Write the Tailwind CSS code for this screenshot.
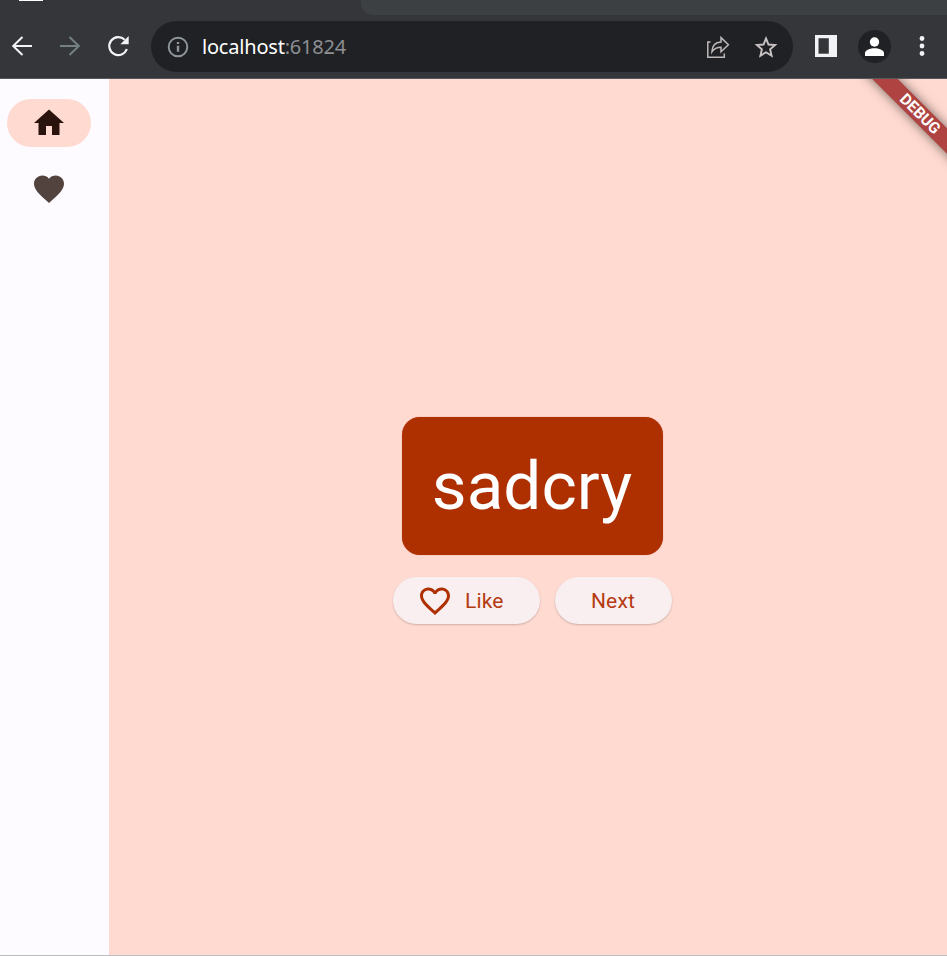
<!DOCTYPE html>
<html lang="en">
<head>
<meta charset="utf-8">
<title>localhost:61824</title>
<script src="https://cdn.jsdelivr.net/npm/@tailwindcss/browser@4"></script>
</head>
<body class="h-screen overflow-hidden flex flex-col bg-[#fdfbff] font-['Roboto',sans-serif]">
  <header class="h-[79px] shrink-0 flex flex-col bg-[#35363a] border-b border-[#55585d]">
    <div class="h-[15px] flex justify-between">
      <div class="ml-[19px] w-6 h-px bg-white"></div>
      <div class="w-[586px] bg-[#3c4043] rounded-bl-[12px]"></div>
    </div>
    <div class="flex items-center h-[63px]">
      <svg class="ml-[10px] mb-[2px] w-6 h-6 shrink-0" viewBox="0 0 24 24" fill="none" stroke="#f1f3f4" stroke-width="2"><path d="M22 12H3.500M12.500 3 3.200 12l9.300 9"/></svg>
      <svg class="ml-6 mb-[2px] w-6 h-6 shrink-0" viewBox="0 0 24 24" fill="none" stroke="#758083" stroke-width="2"><path d="M2 12h18.500M11.500 3l9.300 9-9.300 9"/></svg>
      <svg class="ml-6 mb-[2px] w-6 h-6 shrink-0" viewBox="0 0 24 24"><path d="M20.800 15a9 9 0 1 1-2.100-9.200" fill="none" stroke="#f1f3f4" stroke-width="2.200"/><path d="M22.700 2v8.300h-8.300z" fill="#f1f3f4"/></svg>
      <div class="ml-[21px] w-[642px] h-[51px] rounded-full bg-[#202124] flex items-center shrink-0">
        <svg class="ml-4 mt-px w-[22px] h-[22px]" viewBox="0 0 22 22"><circle cx="11" cy="11" r="9.300" fill="none" stroke="#8f979d" stroke-width="1.900"/><path d="M11 9.800v6M11 5.900v2.200" stroke="#8f979d" stroke-width="2.400"/></svg>
        <div class="ml-[13px] text-[20px] leading-6 tracking-[-0.2px] text-white font-['Noto_Sans',sans-serif] whitespace-nowrap">localhost<span class="text-[#8c8e92]">:61824</span></div>
        <svg class="ml-auto mr-[24px] w-6 h-6" viewBox="0 0 24 24" fill="none" stroke="#bdb8b8" stroke-width="1.500"><path d="M4.500 7H1.800v15.200h16.500v-3.800"/><path d="M15 2.600v4.400C9.500 7.200 6.200 10.600 5.900 16.800c2.300-3.400 5-4.600 9.100-4.600v4.500l7.400-7z"/></svg>
        <svg class="mr-[15px] w-6 h-6" viewBox="0 0 24 24" fill="none" stroke="#c9c3c4" stroke-width="1.900"><path d="m12 3.400 2.500 6.100 6.600.5-5 4.300 1.500 6.400L12 17.300l-5.600 3.400 1.500-6.400-5-4.300 6.600-.5z"/></svg>
      </div>
      <svg class="ml-[22px] mb-[2px] w-[22px] h-[22px] shrink-0" viewBox="0 0 22 22"><path d="M0 0h22v22H0z" fill="#f1f3f4"/><path d="M3.500 3.200h10.300v15.500H3.500z" fill="#35363a"/></svg>
      <div class="ml-[21px] w-[33px] h-[33px] rounded-full bg-[#202124] shrink-0">
        <svg class="w-[33px] h-[33px]" viewBox="0 0 33 33" fill="#fff"><circle cx="16.500" cy="12" r="4.700"/><path d="M7 26v-3c0-3 5.500-4.800 9.500-4.800s9.500 1.800 9.500 4.800v3z"/></svg>
      </div>
      <svg class="ml-[24px] mb-[2px] w-[14px] h-6 shrink-0" viewBox="0 0 14 24" fill="#f1f3f4"><circle cx="7" cy="4.500" r="2.400"/><circle cx="7" cy="12" r="2.400"/><circle cx="7" cy="19.500" r="2.400"/></svg>
    </div>
  </header>
  <div class="flex flex-1 border-b border-black/25">
    <nav class="w-[109px] shrink-0 pt-5 pl-[7px] flex flex-col gap-[18px]">
      <div class="w-[84px] h-12 rounded-full bg-[#ffdad1] flex items-center justify-center">
        <svg class="w-9 h-9" viewBox="0 0 24 24" fill="#2b130d"><path d="M10 20v-6h4v6h5v-8h3L12 3 2 12h3v8z"/></svg>
      </div>
      <div class="w-[84px] h-12 flex items-center justify-center">
        <svg class="w-9 h-9" viewBox="0 0 24 24" fill="#53433f"><path d="M12 21.350l-1.450-1.320C5.400 15.360 2 12.280 2 8.500 2 5.420 4.420 3 7.500 3c1.740 0 3.410.81 4.500 2.090C13.090 3.810 14.760 3 16.500 3 19.580 3 22 5.420 22 8.500c0 3.780-3.400 6.860-8.550 11.540z"/></svg>
      </div>
    </nav>
    <main class="flex-1 relative overflow-hidden bg-[#ffdad1] flex flex-col items-center pt-[338px] pl-[9px]">
      <div class="w-[261px] h-[138px] rounded-[18px] bg-[#ae2f00] shadow-[0_0_1px_rgba(174,47,0,0.6)] flex items-center justify-center pb-px pr-px text-white text-[67.5px] leading-[78px]">sadcry</div>
      <div class="mt-[22px] flex gap-[15px] text-[21px] text-[#b53b12] tracking-[0.15px]">
        <div class="w-[147px] h-[47px] rounded-full bg-[#f9eef0] shadow-[0_1px_2px_rgba(0,0,0,0.2)] flex items-center pl-6 gap-3">
          <svg class="w-9 h-9" viewBox="0 0 24 24" fill="#ae2f00"><path d="M16.500 3c-1.740 0-3.410.81-4.500 2.090C10.910 3.810 9.240 3 7.500 3 4.420 3 2 5.420 2 8.500c0 3.780 3.400 6.860 8.550 11.540L12 21.350l1.450-1.320C18.600 15.360 22 12.280 22 8.500 22 5.420 19.580 3 16.500 3zm-4.400 15.550l-.1.100-.1-.1C7.140 14.240 4 11.390 4 8.500 4 6.500 5.500 5 7.500 5c1.540 0 3.040.99 3.570 2.360h1.870C13.460 5.990 14.960 5 16.500 5c2 0 3.500 1.500 3.500 3.500 0 2.890-3.140 5.740-7.900 10.050z"/></svg>
          <span class="pt-[2px]">Like</span>
        </div>
        <div class="w-[117px] h-[47px] rounded-full bg-[#f9eef0] shadow-[0_1px_2px_rgba(0,0,0,0.2)] flex items-center justify-center pt-[2px] pr-px">Next</div>
      </div>
      <div class="absolute left-[731px] top-[26px] w-[160px] h-[18px] rotate-45 bg-[#ae4341] shadow-[0_0_12px_rgba(0,0,0,0.55)] text-white text-[15.6px] leading-[18px] font-bold text-center">DEBUG</div>
    </main>
  </div>
</body>
</html>
